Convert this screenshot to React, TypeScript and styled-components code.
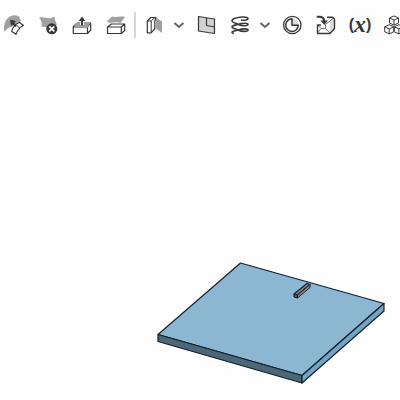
import React from "react";
import styled, { createGlobalStyle } from "styled-components";

const GlobalStyle = createGlobalStyle`
  * { box-sizing: border-box; }
  body { margin: 0; background: #fefefe; font-family: "Liberation Sans", sans-serif; }
`;

const Page = styled.div`
  display: flex;
  flex-direction: column;
  min-height: 100vh;
  overflow: hidden;
`;

const Toolbar = styled.div`
  display: flex;
  align-items: center;
  height: 50px;
  margin-left: -3px;
`;

const ToolButton = styled.button<{ $narrow?: boolean }>`
  display: flex;
  flex: none;
  align-items: center;
  justify-content: center;
  width: ${(p) => (p.$narrow ? 18 : 34)}px;
  height: 34px;
  padding: 0;
  border: 0;
  background: transparent;
  color: #383838;
`;

const Divider = styled.div`
  flex: none;
  width: 2px;
  height: 26px;
  margin: 0 1px;
  background: #d6d6d6;
`;

const Icon = styled.svg`
  display: block;
  flex: none;
  width: 24px;
  height: 24px;
  fill: none;
  stroke: currentColor;
  stroke-width: 1.2;
  stroke-linejoin: round;
`;

const ChevronIcon = styled.svg`
  display: block;
  width: 12px;
  height: 12px;
  fill: none;
  stroke: #666;
  stroke-width: 2;
`;

const Variable = styled.span`
  display: flex;
  align-items: center;
  font: bold 16px/24px "Liberation Sans", sans-serif;
`;

const VariableLetter = styled.i`
  font: italic bold 24px/20px "Liberation Serif", serif;
  padding-bottom: 3px;
`;

const Viewport = styled.main`
  display: flex;
  flex: 1;
  align-items: flex-end;
  justify-content: flex-end;
  padding: 10px;
`;

const Model = styled.svg`
  display: block;
  width: 240px;
  height: 135px;
  stroke: #14202a;
  stroke-width: 1.2;
  stroke-linejoin: round;
`;

function Tool({ label, children }: { label: string; children: React.ReactNode }) {
  return (
    <ToolButton type="button" aria-label={label}>
      <Icon viewBox="0 0 24 24">{children}</Icon>
    </ToolButton>
  );
}

function MoreTools({ label }: { label: string }) {
  return (
    <ToolButton type="button" $narrow aria-label={label}>
      <ChevronIcon viewBox="0 0 12 12">
        <path d="M0.5 4 L5 8 L9.5 4" />
      </ChevronIcon>
    </ToolButton>
  );
}

function Cube({ x, y }: { x: number; y: number }) {
  return (
    <path
      fill="#fefefe"
      strokeWidth={1}
      d={`M${x} ${y - 4.6} l4.5 2.1 v5 l-4.5 2.1 l-4.5 -2.1 v-5 Z m-4.5 2.1 l4.5 2.1 l4.5 -2.1 m-4.5 2.1 v5`}
    />
  );
}

export default function App() {
  return (
    <Page>
      <GlobalStyle />
      <Toolbar role="toolbar" aria-label="Features">
        <Tool label="Move face">
          <path fill="#a0a0a0" stroke="none" d="M2.5 19 C1 13 3 7 7 4 C11 1.8 14 2 17 3.5 L19 8 L12 13 C7 14 4 16 2.5 19 Z" />
          <path fill="#fefefe" d="M9.7 18.5 C10.5 15 13 11 17.5 9.5 L21.5 12.5 C18 14 15.5 17 14 21.3 Z" />
          <path strokeWidth="1" d="M14 11.5 L17.6 15.2" />
          <path strokeWidth="2" d="M14 13.5 L10.5 9.5" />
          <path fill="currentColor" stroke="none" d="M8 6.8 L14 8 L9 13 Z" />
        </Tool>
        <Tool label="Delete face">
          <path fill="#a0a0a0" stroke="none" d="M3 4.8 C9 3 12 7.5 18.5 3.5 C18.5 7 20 9 21 12 L11 15 C9 13 7 14 5.5 13.5 C6.3 10 5.5 7.5 3 4.8 Z" />
          <circle cx="15.8" cy="15.8" r="5.5" fill="currentColor" stroke="none" />
          <path stroke="#fefefe" strokeWidth="1.8" d="M13.3 13.3 L18.3 18.3 M18.3 13.3 L13.3 18.3" />
        </Tool>
        <Tool label="Thicken">
          <path fill="#fefefe" d="M3.3 13.5 L7.5 10 H20.7 V17 L17.5 20.5 H3.3 Z" />
          <path d="M3.3 14 H17.5 V20.5 M17.5 14 L20.7 10" />
          <path fill="#a0a0a0" stroke="none" d="M3.8 13.8 C5 11 6 9.8 8 9.8 H20.6 C19 12 18.5 14 17 15 C12 16.5 8 12.5 3.8 13.8 Z" />
          <path stroke="#fefefe" strokeWidth="4" d="M12 5.5 V12" />
          <path strokeWidth="2" d="M12 6 V12.5" />
          <path fill="currentColor" stroke="none" d="M12 3.5 L15.3 8 H8.7 Z" />
        </Tool>
        <Tool label="Replace face">
          <path fill="#a0a0a0" stroke="none" d="M8 3.6 C12 5 16 2.5 21 4 L16.5 10 C11 8 8 11 2.7 8.8 Z" />
          <path fill="#fefefe" d="M3.5 14 L7.3 11 H20.7 V17.5 L17.3 20.5 H3.5 Z M3.5 14 H17.3 V20.5 M17.3 14 L20.7 11" />
        </Tool>
        <Divider />
        <Tool label="Split">
          <path fill="#fefefe" d="M5.3 8 L8.7 4.5 H14 L12.8 8 V16 L9 19.8 H5.3 Z" />
          <path strokeWidth="1" d="M5.3 8 H9.2 L12.8 4.5 M9.2 8 V19.5" />
          <path fill="#a0a0a0" stroke="none" d="M14 4.5 L20 8.5 V20 L14 15.5 Z" />
        </Tool>
        <MoreTools label="More split tools" />
        <Tool label="Plane">
          <path fill="#d2d2d2" d="M4.5 3.5 L20.5 6 V20.5 L4.5 18 Z" />
          <path d="M12.5 5 V12.5 L20.5 14" />
        </Tool>
        <Tool label="Helix">
          <path strokeWidth="1.6" d="M13 7 C17 7.5 20 7 20 5.5 C20 4.2 16 3.8 12 4.2 C6 4.8 3.8 6.5 4 8 C4.2 9.5 8 10.3 10.5 11.5 C14 13.2 20 13 20 11.3 C20 9.8 14 9.8 10.5 11.3 C7 12.2 4 12.2 4 14 C4 15.3 8 16 10.5 17.2 C14 18.9 20 18.7 20 17 C20 15.5 14 15.5 10.5 17 C7 18 4 17.8 4 19.2 C4 20 5 20.2 6 20.4" />
        </Tool>
        <MoreTools label="More curve tools" />
        <Tool label="Modify fillet">
          <circle cx="12.3" cy="12" r="8.7" strokeWidth="1.3" />
          <path fill="#dcdcdc" stroke="none" d="M12.3 5.3 A6.7 6.7 0 0 1 19 12 H12.3 Z" />
          <path strokeWidth="1.5" d="M12 5.8 V12.3 H18.3 A6.3 6.3 0 1 1 12 5.8 Z" />
        </Tool>
        <Tool label="Derived">
          <path fill="#fefefe" stroke="none" d="M3.5 12 L13 4.3 H20.5 V15.5 L16 20.5 H3.5 Z" />
          <path fill="#dcdcdc" stroke="none" d="M16 9 L20 5 V15 L16 19.5 Z" />
          <path strokeWidth="1" stroke="#777" d="M3.5 12 L7 15.5 H11.5 V11.5 L16 8 L20.5 4.3 M7 15.5 L3.5 20 M11.5 15.5 L16 20" />
          <path strokeWidth="1.4" d="M7 12 H3.5 V20.5 H16 L20.5 15.5 V6 L18.5 4.3 H13" />
          <path strokeWidth="2" d="M2.7 3.7 H5 C8.8 3.7 10.3 5.5 10.3 8.5" />
          <path fill="currentColor" stroke="none" d="M6.5 7.5 L10.2 12 L14 7.5 Z" />
        </Tool>
        <ToolButton type="button" aria-label="Variable">
          <Variable>
            (<VariableLetter>x</VariableLetter>)
          </Variable>
        </ToolButton>
        <Tool label="Composite part">
          <Cube x={12} y={7.5} />
          <Cube x={7.2} y={16.3} />
          <Cube x={16.8} y={16.3} />
        </Tool>
      </Toolbar>
      <Viewport>
        <Model viewBox="150 255 240 135" role="img" aria-label="Plate with a small bar">
          <path fill="#8bb7d3" d="M240.5 263 L384 303.5 L302 375.5 L158 334.5 Z" />
          <path fill="#4c6777" d="M158 334.5 L302 375.5 V383 L158 341.5 Z" />
          <path fill="#72a4c5" d="M302 375.5 L384 303.5 V311 L302 383 Z" />
          <path fill="#8b8786" d="M294 294 L307 283.5 L310 284.5 L297.5 295 Z" />
          <path fill="#8b8786" d="M297.5 295 L310 284.5 V287.5 L297.5 298 Z" strokeWidth="1" />
          <path fill="#555" d="M294 294 L297.5 295 V298 L294 297 Z" strokeWidth="1" />
        </Model>
      </Viewport>
    </Page>
  );
}
